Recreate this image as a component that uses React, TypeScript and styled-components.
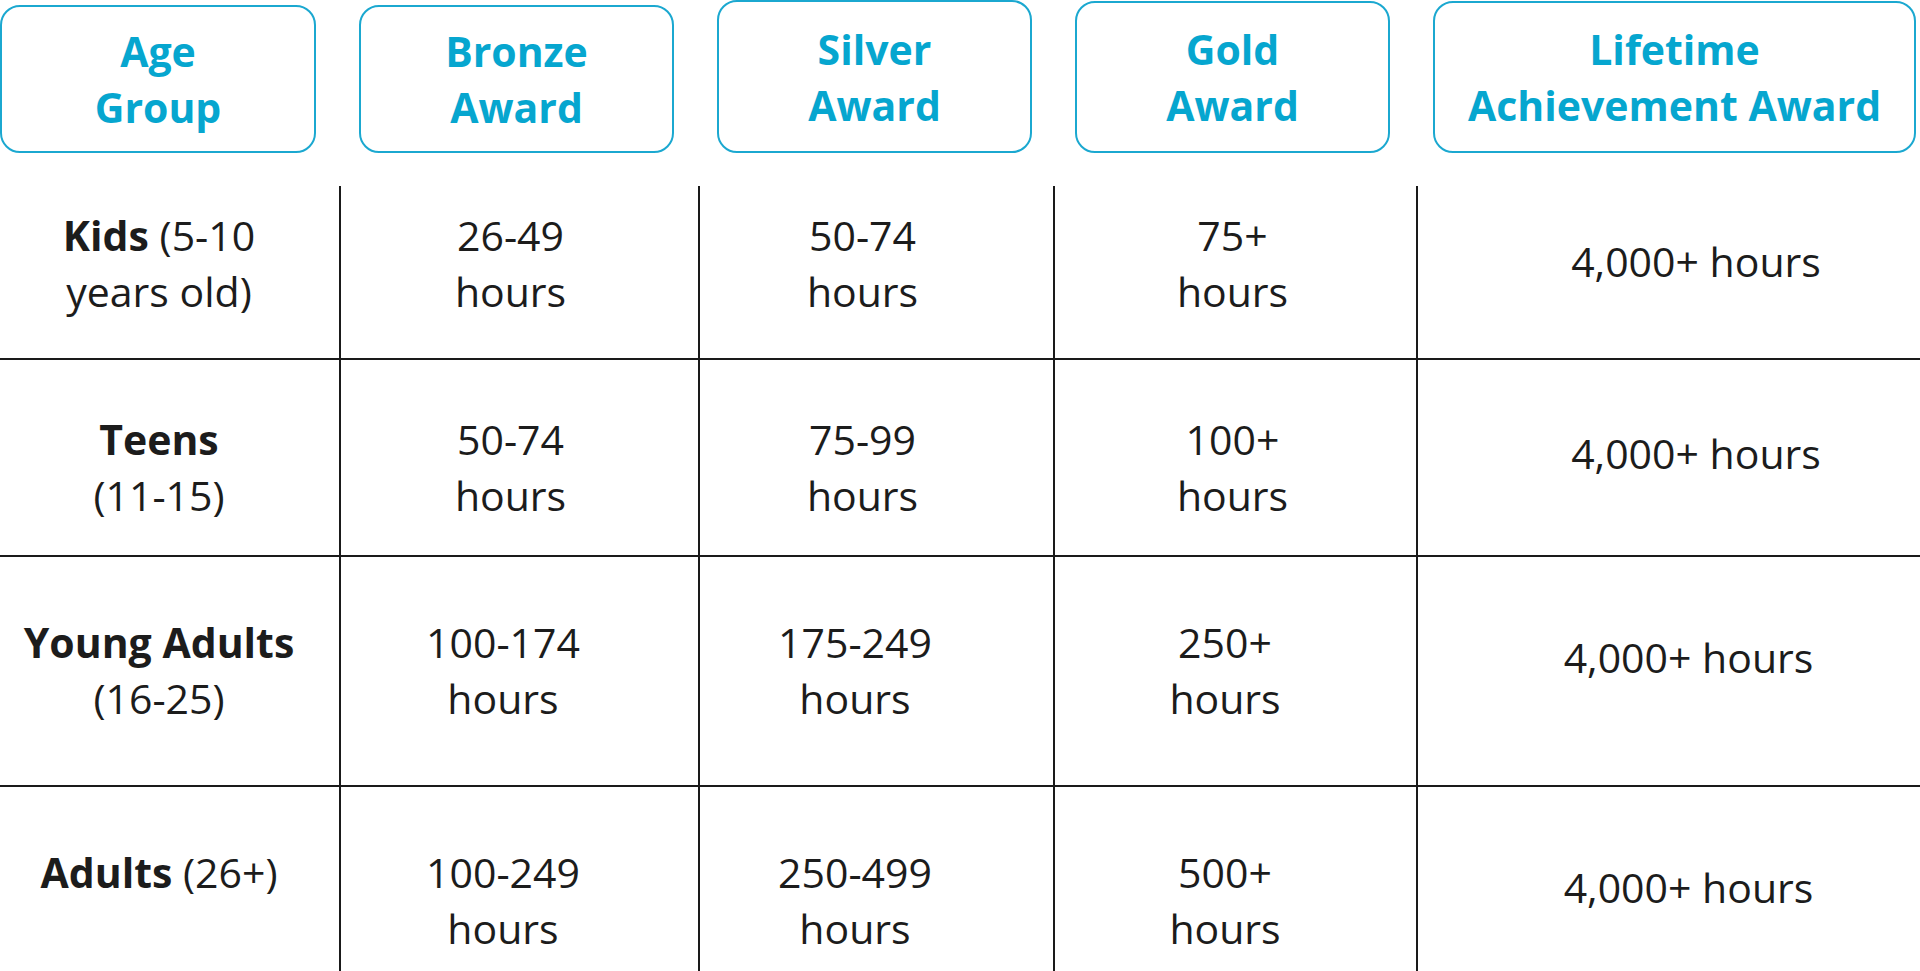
import { ReactNode } from 'react';
import styled, { createGlobalStyle } from 'styled-components';

const GlobalStyle = createGlobalStyle`
  html, body {
    margin: 0;
    padding: 0;
    background: #fff;
  }
  body {
    font-family: 'Open Sans', 'Noto Sans', sans-serif;
    color: #1c1c1c;
    overflow: hidden;
  }
`;

const Page = styled.main`
  width: 1920px;
  height: 971px;
  overflow: hidden;
`;

const HeaderRow = styled.header`
  display: flex;
  align-items: flex-end;
  gap: 43px;
  height: 153px;
`;

const HeadBox = styled.div<{ $w: number; $h: number }>`
  box-sizing: border-box;
  flex: none;
  width: ${(p) => p.$w}px;
  height: ${(p) => p.$h}px;
  border: 2px solid #1ba8d0;
  border-radius: 20px;
  display: flex;
  align-items: center;
  justify-content: center;
  text-align: center;
  color: #06a6cf;
  font-weight: 700;
  font-size: 41px;
  line-height: 56px;
`;

const Table = styled.section`
  margin-top: 33px;
`;

const Row = styled.div<{ $h: number; $first?: boolean }>`
  box-sizing: border-box;
  display: grid;
  grid-template-columns: 339px 359px 355px 363px 1fr;
  height: ${(p) => p.$h}px;
  border-top: ${(p) => (p.$first ? 'none' : '2px solid #1a1a1a')};
`;

const Cell = styled.div<{ $dx: number; $dy: number }>`
  box-sizing: border-box;
  display: flex;
  align-items: center;
  justify-content: center;
  text-align: center;
  font-size: 41px;
  line-height: 56px;
  padding-left: ${(p) => Math.max(0, p.$dx * 2)}px;
  padding-right: ${(p) => Math.max(0, -p.$dx * 2)}px;
  padding-top: ${(p) => Math.max(0, p.$dy * 2)}px;
  padding-bottom: ${(p) => Math.max(0, -p.$dy * 2)}px;

  & + & {
    border-left: 2px solid #1a1a1a;
  }

  b {
    font-weight: 700;
  }
`;

const heads = [
  { w: 316, h: 148, lines: ['Age', 'Group'] },
  { w: 315, h: 148, lines: ['Bronze', 'Award'] },
  { w: 315, h: 153, lines: ['Silver', 'Award'] },
  { w: 315, h: 152, lines: ['Gold', 'Award'] },
  { w: 483, h: 152, lines: ['Lifetime', 'Achievement Award'] },
];

// horizontal nudge per column, measured from the picture
const colDx = [-10.5, -9, -14, -3, 27];

type RowData = {
  h: number;
  shift: number;
  multi: number;
  single: number;
  groupDy?: number;
  group: ReactNode;
  bronze: string;
  silver: string;
  gold: string;
};

const rows: RowData[] = [
  {
    h: 172,
    shift: 0,
    multi: -9,
    single: -11,
    group: (
      <>
        <b>Kids</b> (5-10
        <br />
        years old)
      </>
    ),
    bronze: '26-49',
    silver: '50-74',
    gold: '75+',
  },
  {
    h: 197,
    shift: 0,
    multi: 9,
    single: -5,
    group: (
      <>
        <b>Teens</b>
        <br />
        (11-15)
      </>
    ),
    bronze: '50-74',
    silver: '75-99',
    gold: '100+',
  },
  {
    h: 230,
    shift: -7.5,
    multi: -1,
    single: -14,
    group: (
      <>
        <b>Young Adults</b>
        <br />
        (16-25)
      </>
    ),
    bronze: '100-174',
    silver: '175-249',
    gold: '250+',
  },
  {
    h: 230,
    shift: -7.5,
    multi: -1,
    single: -14,
    groupDy: -29,
    group: (
      <>
        <b>Adults</b> (26+)
      </>
    ),
    bronze: '100-249',
    silver: '250-499',
    gold: '500+',
  },
];

function App(): JSX.Element {
  return (
    <Page>
      <GlobalStyle />
      <HeaderRow>
        {heads.map((hd) => (
          <HeadBox key={hd.lines[0]} $w={hd.w} $h={hd.h}>
            <div>
              {hd.lines[0]}
              <br />
              {hd.lines[1]}
            </div>
          </HeadBox>
        ))}
      </HeaderRow>
      <Table>
        {rows.map((r, i) => (
          <Row key={r.bronze + i} $h={r.h} $first={i === 0}>
            <Cell $dx={colDx[0]} $dy={r.groupDy ?? r.multi}>
              <div>{r.group}</div>
            </Cell>
            {[r.bronze, r.silver, r.gold].map((v, j) => (
              <Cell key={j} $dx={colDx[j + 1] + r.shift} $dy={r.multi}>
                <div>
                  {v}
                  <br />
                  hours
                </div>
              </Cell>
            ))}
            <Cell $dx={colDx[4] + r.shift} $dy={r.single}>
              <div>4,000+ hours</div>
            </Cell>
          </Row>
        ))}
      </Table>
    </Page>
  );
}

export default App;
